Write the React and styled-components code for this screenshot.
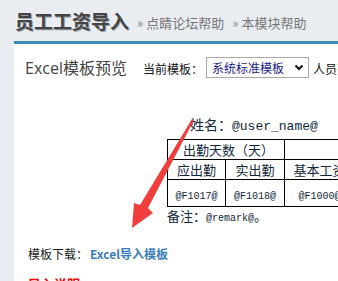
import React from "react";
import styled, { createGlobalStyle } from "styled-components";

const GlobalStyle = createGlobalStyle`
  html, body {
    margin: 0;
    padding: 0;
    background: #e9edf2;
    font-family: "Noto Sans CJK SC", "Noto Sans", sans-serif;
    overflow: hidden;
  }
`;

const Page = styled.div`
  position: relative;
  width: 338px;
  height: 281px;
  overflow: hidden;
`;

const Header = styled.div`
  display: flex;
  align-items: center;
  height: 41px;
  padding-left: 15px;
  white-space: nowrap;
`;

const Title = styled.h1`
  margin: 0 6px 0 0;
  font-size: 19px;
  font-weight: bold;
  color: #444;
  text-shadow: 1px 1px 0 #9aa0a8;
  line-height: 22px;
`;

const HelpLink = styled.a`
  font-size: 13px;
  color: #777;
  margin-left: 2px;
  margin-right: 6px;
  padding-top: 3px;
  text-decoration: none;

  &::before {
    content: "»";
    margin-right: 3px;
    color: #888;
  }
`;

const Panel = styled.div`
  margin-left: 14px;
  border-top: 3px solid #3c8ab5;
  background: #fff;
  height: 300px;
`;

const Toolbar = styled.div`
  display: flex;
  align-items: center;
  height: 30px;
  padding: 8px 0 0 11px;
  white-space: nowrap;

  & > * {
    flex-shrink: 0;
  }
`;

const PanelTitle = styled.span`
  font-family: "Open Sans", "Noto Sans CJK SC", sans-serif;
  font-size: 16px;
  color: #444;
  margin-right: 16px;
`;

const Label = styled.span`
  font-size: 12px;
  color: #111;
  padding-top: 2px;
`;

const Select = styled.div`
  display: flex;
  align-items: center;
  justify-content: space-between;
  box-sizing: border-box;
  width: 103px;
  height: 21px;
  margin: 0 4px 0 3px;
  padding: 0 4px 0 5px;
  border: 1px solid #a9a9a9;
  font-size: 12px;
  color: #1a1a8c;
`;

const Preview = styled.div`
  padding: 32px 0 0 153px;
  color: #12283a;
  font-family: "Noto Sans CJK SC", sans-serif;
`;

const NameLine = styled.div`
  padding-left: 23px;
  font-size: 14px;
  height: 20px;
  line-height: 20px;
  white-space: nowrap;
`;

const Mono = styled.span`
  font-family: "Liberation Mono", monospace;
  font-size: ${(p) => p.size || 10}px;
`;

const Sheet = styled.table`
  border-collapse: collapse;
  table-layout: fixed;
  width: 187px;
  margin-top: 5px;
  white-space: nowrap;
`;

const Cell = styled.td`
  border: 1px solid #000;
  padding: 0 0 0 ${(p) => (p.left ? "15px" : "0")};
  height: ${(p) => p.h}px;
  font-size: 13px;
  overflow: hidden;
  text-align: ${(p) => (p.left ? "left" : "center")};
`;

const Remark = styled.div`
  font-size: 13px;
  height: 18px;
  line-height: 18px;
  white-space: nowrap;
`;

const Download = styled.div`
  padding: 20px 0 0 14px;
  font-size: 12px;
  color: #222;
  white-space: nowrap;
`;

const DownloadLink = styled.a`
  color: #3a7cbc;
  font-weight: bold;
  margin-left: 2px;
  text-decoration: none;
`;

const Notice = styled.div`
  padding: 12px 0 0 14px;
  font-size: 13px;
  font-weight: bold;
  color: #e00;
`;

const Arrow = styled.svg`
  position: absolute;
  left: 0;
  top: 0;
  pointer-events: none;
`;

export default function App() {
  return (
    <Page>
      <GlobalStyle />
      <Header>
        <Title>员工工资导入</Title>
        <HelpLink>点睛论坛帮助</HelpLink>
        <HelpLink>本模块帮助</HelpLink>
      </Header>
      <Panel>
        <Toolbar>
          <PanelTitle>Excel模板预览</PanelTitle>
          <Label>当前模板：</Label>
          <Select>
            系统标准模板
            <svg width="10" height="7" viewBox="0 0 10 7">
              <path d="M1.5 1.5 L5 5 L8.5 1.5" fill="none" stroke="#111" strokeWidth="2" />
            </svg>
          </Select>
          <Label>人员范围</Label>
        </Toolbar>
        <Preview>
          <NameLine>
            姓名：<Mono size={13}>@user_name@</Mono>
          </NameLine>
          <Sheet>
            <colgroup>
              <col style={{ width: 58 }} />
              <col style={{ width: 59 }} />
              <col style={{ width: 70 }} />
            </colgroup>
            <tbody>
              <tr>
                <Cell colSpan={2} h={18} left>出勤天数（天）</Cell>
                <Cell h={18}></Cell>
              </tr>
              <tr>
                <Cell h={19}>应出勤</Cell>
                <Cell h={19}>实出勤</Cell>
                <Cell h={19}>基本工资</Cell>
              </tr>
              <tr>
                <Cell h={26}><Mono>@F1017@</Mono></Cell>
                <Cell h={26}><Mono>@F1018@</Mono></Cell>
                <Cell h={26}><Mono>@F1000@</Mono></Cell>
              </tr>
            </tbody>
          </Sheet>
          <Remark>
            备注：<Mono>@remark@</Mono>。
          </Remark>
        </Preview>
        <Download>
          模板下载：<DownloadLink>Excel导入模板</DownloadLink>
        </Download>
        <Notice>导入说明</Notice>
      </Panel>
      <Arrow width="338" height="281" viewBox="0 0 338 281">
        <polygon
          fill="#f23d3d"
          points="192,119 194,120 148,208 153,213 132,228 134,203 140,205"
        />
      </Arrow>
    </Page>
  );
}
